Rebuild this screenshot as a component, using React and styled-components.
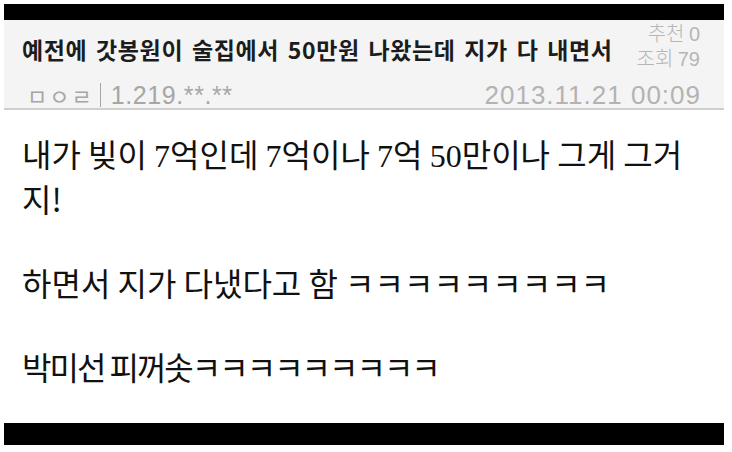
import React from 'react'
import styled, { createGlobalStyle } from 'styled-components'

const Global = createGlobalStyle`
    html, body {
        margin: 0;
        padding: 0;
        background: #fff;
    }
    body {
        font-family: "Noto Sans CJK KR", "Noto Sans", sans-serif;
    }
`

const { Page, Frame, Bar, Header, Row, Title, Meta, Initials, Divider, Ip, Stats, Stat, Date, Body, Para, Num } = {
    Page: styled.div`
        width: 732px;
        height: 452px;
        padding: 4px 0 0 4px;
        box-sizing: border-box;
        background: #fff;
    `,
    Frame: styled.div`
        width: 720px;
        display: flex;
        flex-direction: column;
    `,
    Bar: styled.div`
        height: ${p => p.h}px;
        background: #000;
    `,
    Header: styled.div`
        height: 87px;
        background: #f4f4f4;
        border-bottom: 2px solid #cfcfcf;
        display: flex;
        flex-direction: column;
        padding: 1px 24px 0 18px;
        box-sizing: content-box;
    `,
    Row: styled.div`
        display: flex;
        justify-content: space-between;
        align-items: center;
        padding-top: ${p => p.pt || 0}px;
        white-space: nowrap;
    `,
    Title: styled.div`
        font-size: 23px;
        font-weight: 700;
        color: #1c1c1c;
        line-height: 28px;
        letter-spacing: 0.6px;
        word-spacing: 3px;
        padding-top: 6px;
    `,
    Meta: styled.div`
        display: flex;
        align-items: center;
        padding-left: 5px;
        color: #a6a6a6;
        height: 30px;
    `,
    Initials: styled.span`
        font-size: 22px;
        letter-spacing: 2px;
    `,
    Divider: styled.span`
        width: 1px;
        height: 24px;
        background: #a6a6a6;
        margin: 0 10px 0 6px;
    `,
    Ip: styled.span`
        font-family: "Liberation Sans", Arial, sans-serif;
        font-size: 25px;
        letter-spacing: 0.6px;
    `,
    Stats: styled.div`
        display: flex;
        flex-direction: column;
        align-items: flex-end;
        color: #b6b6b6;
    `,
    Stat: styled.div`
        font-size: 20px;
        font-weight: 300;
        line-height: 23px;
        span {
            font-family: "Liberation Sans", Arial, sans-serif;
        }
    `,
    Date: styled.div`
        font-family: "Liberation Sans", Arial, sans-serif;
        font-size: 26px;
        letter-spacing: 1px;
        line-height: 30px;
        margin-right: -1px;
        color: #b3b3b3;
    `,
    Body: styled.div`
        height: 313px;
        background: #fff;
        padding: 22px 14px 0 18px;
        box-sizing: border-box;
        display: flex;
        flex-direction: column;
        gap: 42px;
        color: #111;
    `,
    Para: styled.p`
        margin: 0;
        font-size: 32px;
        line-height: 42px;
        letter-spacing: ${p => p.ls || 0}px;
    `,
    Num: styled.span`
        font-family: "Liberation Serif", "Times New Roman", serif;
    `
}

const App = () =>
    (
        <Page>
            <Global />
            <Frame>
                <Bar h={16} />
                <Header>
                    <Row>
                        <Title>예전에 갓봉원이 술집에서 50만원 나왔는데 지가 다 내면서</Title>
                        <Stats>
                            <Stat>추천 <span>0</span></Stat>
                            <Stat>조회 <span>79</span></Stat>
                        </Stats>
                    </Row>
                    <Row pt={9}>
                        <Meta>
                            <Initials>ㅁㅇㄹ</Initials>
                            <Divider />
                            <Ip>1.219.**.**</Ip>
                        </Meta>
                        <Date>2013.11.21 00:09</Date>
                    </Row>
                </Header>
                <Body>
                    <Para>
                        내가 빚이 <Num>7</Num>억인데 <Num>7</Num>억이나 <Num>7</Num>억 <Num>50</Num>만이나 그게 그거지!
                    </Para>
                    <Para>
                        하면서 지가 다냈다고 함 ㅋㅋㅋㅋㅋㅋㅋㅋㅋ
                    </Para>
                    <Para ls={-2}>
                        박미선 피꺼솟ㅋㅋㅋㅋㅋㅋㅋㅋㅋ
                    </Para>
                </Body>
                <Bar h={22} />
            </Frame>
        </Page>
    )

export default App
